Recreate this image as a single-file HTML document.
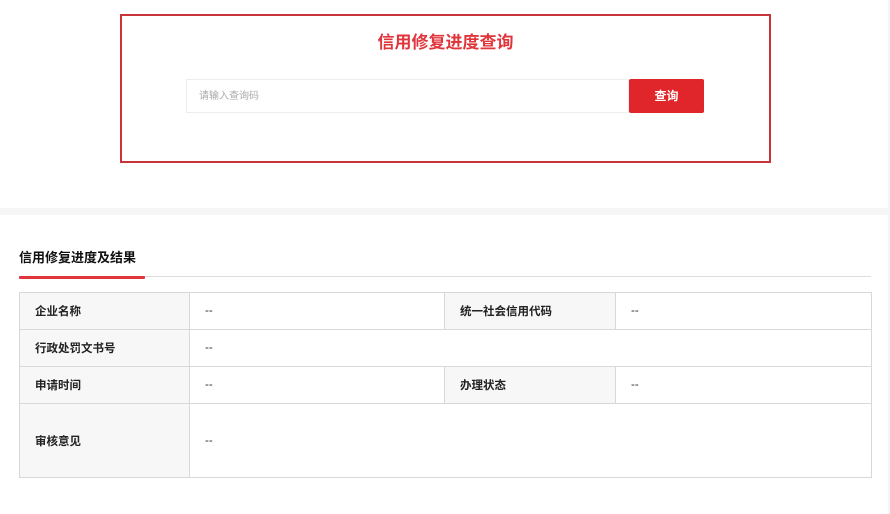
<!DOCTYPE html>
<html><head><meta charset="utf-8"><style>
*{margin:0;padding:0;box-sizing:border-box}
body{width:890px;height:514px;background:#f6f6f6;font-family:"Liberation Sans","Noto Sans CJK SC",sans-serif;position:relative;overflow:hidden}
.p1{position:absolute;left:0;top:0;width:888px;height:208px;background:#fff}
.p2{position:absolute;left:0;top:215px;width:888px;height:299px;background:#fff}
.box{position:absolute;left:120px;top:14px;width:651px;height:149px;border:2px solid #c9333a}
.title{position:absolute;left:0;right:0;top:17px;text-align:center;color:#e0353b;font-size:17px;font-weight:bold;line-height:20px}
.inp{position:absolute;left:186px;top:79px;width:443px;height:34px;border:1px solid #eee;font-size:10px;color:#aaa;line-height:34px;padding-left:12px}
.btn{position:absolute;left:629px;top:79px;width:75px;height:34px;background:#e0262b;color:#fff;font-size:12px;font-weight:bold;text-align:center;line-height:34px;border-radius:2px}
.h{position:absolute;left:19px;top:250px;font-size:13px;font-weight:bold;color:#111;line-height:16px}
.gl{position:absolute;left:19px;top:276px;width:852px;height:1px;background:#ddd}
.rl{position:absolute;left:19px;top:276px;width:126px;height:3px;background:#e0353b;border-radius:1px}
table{position:absolute;left:19px;top:292px;width:853px;border-collapse:collapse;font-size:11.5px}
td{border:1px solid #d8d8d8;height:37px;padding-left:15px;color:#333}
td.l{background:#f7f7f7;font-weight:bold;color:#222}
</style></head><body>
<div class="p1"><div class="box"><div class="title">信用修复进度查询</div></div>
<div class="inp">请输入查询码</div><div class="btn">查询</div></div>
<div class="p2"></div>
<div class="h">信用修复进度及结果</div>
<div class="gl"></div><div class="rl"></div>
<table>
<tr><td class="l" style="width:170px">企业名称</td><td style="width:255px">--</td><td class="l" style="width:171px">统一社会信用代码</td><td>--</td></tr>
<tr><td class="l">行政处罚文书号</td><td colspan="3">--</td></tr>
<tr><td class="l">申请时间</td><td>--</td><td class="l">办理状态</td><td>--</td></tr>
<tr><td class="l" style="height:74px">审核意见</td><td colspan="3">--</td></tr>
</table>
</body></html>
